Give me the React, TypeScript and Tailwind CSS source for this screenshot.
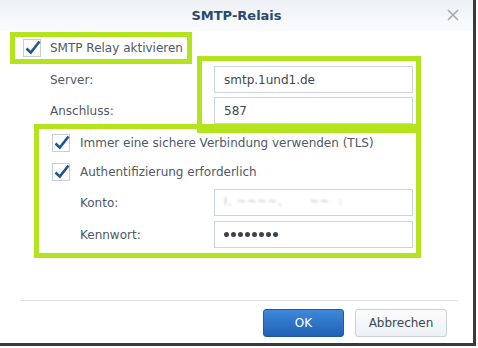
import React from 'react';

function Check() {
  return (
    <svg width="18" height="18" viewBox="0 0 18 18" className="shrink-0 overflow-visible">
      <rect x="0.5" y="0.5" width="17" height="17" fill="#fff" stroke="#c5ceda" />
      <path d="M3.5 9.5 L7.8 13.6 L16.5 2.5" fill="none" stroke="#1f5496" strokeWidth="2.6" strokeLinejoin="miter" />
    </svg>
  );
}

function Field({ children }: { children: React.ReactNode }) {
  return (
    <div className="w-[199px] h-[27px] border border-[#cbd4df] bg-white flex items-center pl-[9px] text-[12px] text-[#3f4856]">
      {children}
    </div>
  );
}

export default function App() {
  return (
    <div className="w-[478px] h-[348px] bg-white font-['DejaVu_Sans',sans-serif] text-[12px] text-[#4f5866]">
      <div className="w-[476px] h-[346px] border-r-[3px] border-b-[3px] border-[#3a3a3a] bg-white flex flex-col">
        {/* title bar */}
        <div className="relative h-[31px] shrink-0 flex items-center justify-center bg-gradient-to-b from-[#edf1f6] to-[#fbfcfd]">
          <span className="text-[13px] font-bold text-[#284a70]">SMTP-Relais</span>
          <svg width="12" height="12" viewBox="0 0 12 12" className="absolute left-[447px] top-[9px]">
            <path d="M1 1 L11 11 M11 1 L1 11" stroke="#a3abb5" strokeWidth="1.6" />
          </svg>
        </div>

        {/* relay toggle */}
        <div className="mt-[1px] ml-[10px] w-[182px] h-[32px] border-[5px] border-[#b4e41d] flex items-center gap-[9px] pl-[8px]">
          <Check />
          <span>SMTP Relay aktivieren</span>
        </div>

        {/* server + port */}
        <div className="relative mt-[2px] flex flex-col gap-[4px]">
          <div className="flex items-center">
            <span className="pl-[50px] w-[214px]">Server:</span>
            <Field>smtp.1und1.de</Field>
          </div>
          <div className="flex items-center">
            <span className="pl-[50px] w-[214px]">Anschluss:</span>
            <Field>587</Field>
          </div>
          <div className="absolute left-[197px] top-[-10px] w-[224px] h-[77px] border-[5px] border-[#b4e41d] z-10" />
        </div>

        {/* security + auth */}
        <div className="ml-[34px] w-[387px] h-[134px] border-[5px] border-[#b4e41d] pl-[13px] pt-[4px] flex flex-col">
          <div className="flex items-center gap-[10px] h-[19px]">
            <Check />
            <span>Immer eine sichere Verbindung verwenden (TLS)</span>
          </div>
          <div className="flex items-center gap-[10px] h-[19px] mt-[10px]">
            <Check />
            <span>Authentifizierung erforderlich</span>
          </div>
          <div className="flex items-center mt-[8px]">
            <span className="pl-[28px] w-[162px]">Konto:</span>
            <Field>
              <span className="text-[#b3b9c1] blur-[0.8px] tracking-[1px] text-[11px]">l, ~~~~,&nbsp;&nbsp;&nbsp;&nbsp;&nbsp;&nbsp;~~ &nbsp;:</span>
            </Field>
          </div>
          <div className="flex items-center mt-[5px]">
            <span className="pl-[28px] w-[162px]">Kennwort:</span>
            <Field>
              <div className="flex gap-[2px]">
                {[0, 1, 2, 3, 4, 5, 6, 7].map((i) => (
                  <span key={i} className="w-[5px] h-[5px] rounded-full bg-[#3a4250]" />
                ))}
              </div>
            </Field>
          </div>
        </div>

        {/* footer */}
        <div className="mt-auto">
          <div className="ml-[20px] mr-[15px] h-px bg-[#e1e5eb]" />
          <div className="flex justify-end gap-[11px] pr-[26px] mt-[8px] pb-[6px]">
            <button className="w-[81px] h-[28px] rounded-[3px] border border-[#1d59a6] bg-gradient-to-b from-[#3f88da] to-[#1f62b4] text-white text-[12px]">
              OK
            </button>
            <button className="w-[92px] h-[28px] rounded-[3px] border border-[#c8d1dc] bg-gradient-to-b from-[#fbfcfd] to-[#edf1f6] text-[#3d4653] text-[12px]">
              Abbrechen
            </button>
          </div>
        </div>
      </div>
    </div>
  );
}
